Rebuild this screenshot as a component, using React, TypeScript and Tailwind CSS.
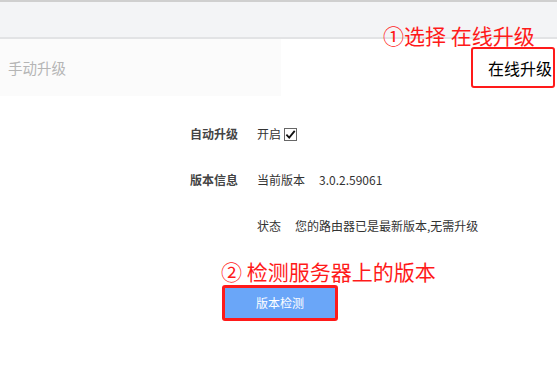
import * as React from "react"

// ==================== ANNOTATIONS ====================

const Note: React.FC<{ className: string; children: React.ReactNode }> = ({ className, children }) => (
  <div className={`absolute whitespace-nowrap text-[#ff1a1a] leading-none ${className}`}>
    {children}
  </div>
)

// ==================== FORM ROW ====================

const Row: React.FC<{ label?: string; children: React.ReactNode }> = ({ label, children }) => (
  <div className="flex h-[46px] items-center text-[12px] text-[#333]">
    <div className="w-[238px] pr-0 text-right font-bold text-[#444]">{label}</div>
    <div className="ml-[19px] flex items-center">{children}</div>
  </div>
)

const App: React.FC = () => {
  return (
    <div
      className="relative h-[369px] w-[557px] overflow-hidden bg-white"
      style={{ fontFamily: '"Noto Sans CJK SC", "Noto Sans", sans-serif' }}
    >
      {/* top strip */}
      <div className="h-[39px] border-t-2 border-b-2 border-t-[#cfcfcf] border-b-[#e2e3e5] bg-[#f3f4f6]" />

      {/* tabs */}
      <div className="flex h-[57px]">
        <div className="flex w-[281px] items-center bg-[#fbfbfb] pl-[8px] text-[14.5px] text-[#b5b5b5]">
          手动升级
        </div>
        <div className="flex flex-1 items-center justify-end pr-[2px]">
          <div className="flex h-[41px] w-[84px] items-center justify-end rounded-[3px] border-2 border-[#ff1a1a] pr-[1px] text-[16px] text-black">
            在线升级
          </div>
        </div>
      </div>

      {/* form */}
      <div className="pt-[15px]">
        <Row label="自动升级">
          <span>开启</span>
          <span className="ml-[3px] flex h-[13px] w-[13px] items-center justify-center border border-[#666] bg-white">
            <svg viewBox="0 0 12 12" className="h-[11px] w-[11px]">
              <path d="M1.5 6.2 L4.6 9.3 L10.6 2" fill="none" stroke="#111" strokeWidth="2" />
            </svg>
          </span>
        </Row>
        <Row label="版本信息">
          <span>当前版本</span>
          <span className="ml-[14px]">3.0.2.59061</span>
        </Row>
        <Row>
          <span>状态</span>
          <span className="ml-[14px]">您的路由器已是最新版本,无需升级</span>
        </Row>
      </div>

      {/* check button */}
      <div className="mt-[36px] ml-[222px] w-fit rounded-[3px] border-[3px] border-[#ff1a1a]">
        <div className="flex h-[30px] w-[110px] items-center justify-center bg-[#6aa6f8] text-[12px] text-white">
          版本检测
        </div>
      </div>

      <Note className="left-[383px] top-[25px] text-[21px]">①选择 在线升级</Note>
      <Note className="left-[221px] top-[261px] text-[21px]">② 检测服务器上的版本</Note>
    </div>
  )
}

export default App
